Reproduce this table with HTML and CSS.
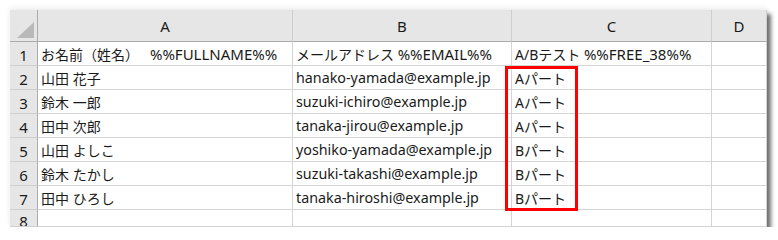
FILE: index.html
```html
<!DOCTYPE html>
<html lang="ja">
<head>
    <meta charset="UTF-8" />
    <title>差し込みリスト</title>
    <link rel="stylesheet" href="styles.css">
</head>
<body>

<div class="sheet">
    <div class="grid">
        <!-- column headers -->
        <div class="corner"><span class="corner-mark"></span></div>
        <div class="col-head">A</div>
        <div class="col-head">B</div>
        <div class="col-head">C</div>
        <div class="col-head">D</div>

        <div class="row-head">1</div>
        <div class="cell">お名前（姓名）&nbsp;&nbsp;&nbsp;<span class="tag">%%FULLNAME%%</span></div>
        <div class="cell">メールアドレス&nbsp;<span class="tag">%%EMAIL%%</span></div>
        <div class="cell">A/Bテスト&nbsp;<span class="tag">%%FREE_38%%</span></div>
        <div class="cell"></div>

        <div class="row-head">2</div>
        <div class="cell">山田 花子</div>
        <div class="cell mail">hanako-yamada@example.jp</div>
        <div class="cell">Aパート</div>
        <div class="cell"></div>

        <div class="row-head">3</div>
        <div class="cell">鈴木 一郎</div>
        <div class="cell mail">suzuki-ichiro@example.jp</div>
        <div class="cell">Aパート</div>
        <div class="cell"></div>

        <div class="row-head">4</div>
        <div class="cell">田中 次郎</div>
        <div class="cell mail">tanaka-jirou@example.jp</div>
        <div class="cell">Aパート</div>
        <div class="cell"></div>

        <div class="row-head">5</div>
        <div class="cell">山田 よしこ</div>
        <div class="cell mail">yoshiko-yamada@example.jp</div>
        <div class="cell">Bパート</div>
        <div class="cell"></div>

        <div class="row-head">6</div>
        <div class="cell">鈴木 たかし</div>
        <div class="cell mail">suzuki-takashi@example.jp</div>
        <div class="cell">Bパート</div>
        <div class="cell"></div>

        <div class="row-head">7</div>
        <div class="cell">田中 ひろし</div>
        <div class="cell mail">tanaka-hiroshi@example.jp</div>
        <div class="cell">Bパート</div>
        <div class="cell"></div>

        <div class="row-head last">8</div>
        <div class="cell"></div>
        <div class="cell"></div>
        <div class="cell"></div>
        <div class="cell"></div>
    </div>

    <!-- highlight around the A/B column values -->
    <div class="highlight"></div>
</div>

</body>
</html>
```

FILE: styles.css
```css
body, html {
    margin: 0;
    padding: 0;
    background: #fff;
}

body {
    padding: 10px 0 0 10px;
}

.sheet {
    position: relative;
    width: 757px;
    height: 217px;
    overflow: hidden;
    background: #fff;
    box-shadow: 4px 4px 4px rgba(0, 0, 0, 0.55), 0 -2px 6px rgba(0, 0, 0, 0.08);
    font-family: "Noto Sans", "Noto Sans CJK JP", sans-serif;
    font-size: 14px;
    color: #1a1a1a;
}

.grid {
    display: grid;
    grid-template-columns: 28px 255px 219px 200px 55px;
    grid-template-rows: 32px repeat(7, 24px) 17px;
}

.grid > div {
    box-sizing: border-box;
    border-right: 1px solid #d4d4d4;
    border-bottom: 1px solid #d4d4d4;
    white-space: nowrap;
    overflow: hidden;
}

.corner,
.col-head,
.row-head {
    background: #e6e6e6;
}

.grid > .corner,
.grid > .col-head {
    border-bottom-color: #ababab;
}

.grid > .corner,
.grid > .row-head {
    border-right-color: #ababab;
}

.grid > .col-head {
    border-right-color: #cfcfcf;
}

.grid > .row-head {
    border-bottom-color: #cfcfcf;
}

.corner {
    position: relative;
}

.corner-mark {
    position: absolute;
    right: 3px;
    bottom: 3px;
    width: 0;
    height: 0;
    border-left: 17px solid transparent;
    border-bottom: 16px solid #b9b9b9;
}

.col-head {
    display: flex;
    align-items: flex-end;
    justify-content: center;
    padding-bottom: 5px;
    font-size: 15px;
}

.row-head {
    display: flex;
    align-items: center;
    justify-content: center;
    padding-top: 2px;
    font-size: 15px;
}

/* last row is only half visible at the bottom of the window */
.row-head.last {
    align-items: flex-start;
    padding-top: 1px;
    line-height: 20px;
}

.cell {
    display: flex;
    align-items: center;
    padding-left: 3px;
}

.tag {
    font-size: 15px;
}

.mail {
    font-size: 14.3px;
}

.highlight {
    position: absolute;
    left: 495px;
    top: 56px;
    width: 73px;
    height: 145px;
    box-sizing: border-box;
    border: 3px solid #ff0000;
}
```
